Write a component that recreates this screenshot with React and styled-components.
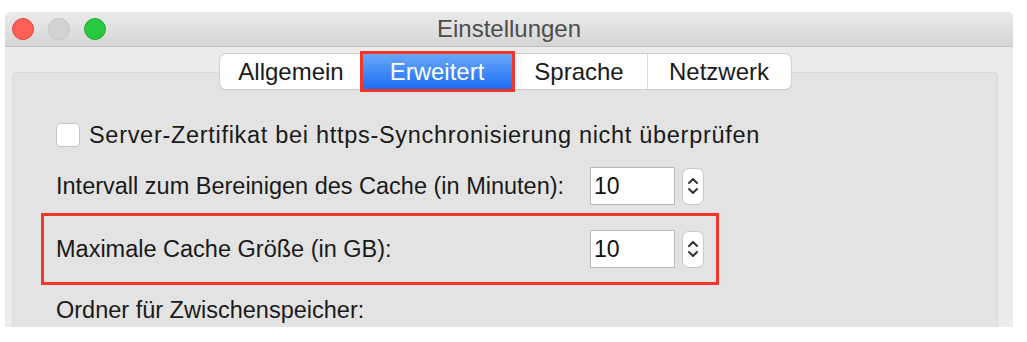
import React from "react";
import styled, { createGlobalStyle } from "styled-components";

const GlobalStyle = createGlobalStyle`
  body {
    margin: 0;
    background: #ffffff;
    font-family: "Liberation Sans", Arial, sans-serif;
  }
`;

const Window = styled.div`
  margin: 12px 0 0 5px;
  width: 1008px;
  height: 315px;
  overflow: hidden;
  background: #ececec;
  border-radius: 5px 5px 0 0;
  display: flex;
  flex-direction: column;
`;

const TitleBar = styled.div`
  height: 34px;
  flex-shrink: 0;
  display: flex;
  align-items: center;
  position: relative;
  background: linear-gradient(#ebebeb, #d5d5d5);
  border-bottom: 1px solid #c2c2c2;
`;

const Lights = styled.div`
  display: flex;
  gap: 14px;
  padding-left: 7px;
`;

const Light = styled.span`
  width: 22px;
  height: 22px;
  border-radius: 50%;
  background: ${(p) => p.color};
  border: 1px solid ${(p) => p.edge};
  box-sizing: border-box;
`;

const Title = styled.div`
  position: absolute;
  left: 0;
  right: 0;
  text-align: center;
  font-size: 24px;
  color: #4d4d4d;
`;

const Content = styled.div`
  flex: 1;
  padding: 7px 15px 0 7px;
  display: flex;
  flex-direction: column;
`;

const TabBar = styled.div`
  align-self: center;
  display: flex;
  height: 35px;
  position: relative;
  z-index: 1;
  background: #ffffff;
  border-radius: 6px;
  box-shadow: 0 0 0 1px #cfcfcf, 0 1px 1px rgba(0, 0, 0, 0.15);
`;

const Tab = styled.div`
  width: ${(p) => p.w}px;
  display: flex;
  align-items: center;
  justify-content: center;
  font-size: 24px;
  color: ${(p) => (p.active ? "#ffffff" : "#1a1a1a")};
  background: ${(p) =>
    p.active ? "linear-gradient(#6aa7f9, #1b6ef3)" : "transparent"};
  border-left: ${(p) => (p.first || p.active || p.afterActive ? "none" : "1px solid #dadada")};
  box-sizing: border-box;
  outline: ${(p) => (p.active ? "3px solid #f2362a" : "none")};
`;

const GroupBox = styled.div`
  flex: 1;
  margin-top: -17px;
  background: #e3e3e3;
  border: 1px solid #d8d8d8;
  border-bottom: none;
  border-radius: 5px 5px 0 0;
  padding: 48px 0 0 28px;
  display: flex;
  flex-direction: column;
`;

const Row = styled.div`
  display: flex;
  align-items: center;
  white-space: nowrap;
  font-size: 23.5px;
  letter-spacing: ${(p) => p.spacing || 0}px;
  color: #1a1a1a;
  box-sizing: border-box;
  width: 678px;
  height: ${(p) => p.h}px;
  margin-top: ${(p) => p.gap || 0}px;
  padding-left: ${(p) => (p.marked ? 12 : 15)}px;
  border: ${(p) => (p.marked ? "3px solid #f2362a" : "none")};
`;

const CheckBox = styled.span`
  width: 24px;
  height: 24px;
  box-sizing: border-box;
  background: #ffffff;
  border: 1px solid #c4c4c4;
  border-radius: 5px;
  margin-right: 9px;
  flex-shrink: 0;
`;

const Label = styled.span`
  width: 534px;
  flex-shrink: 0;
`;

const NumberField = styled.div`
  width: 85px;
  height: 38px;
  box-sizing: border-box;
  background: #ffffff;
  border: 1px solid #b9b9b9;
  display: flex;
  align-items: center;
  padding-left: 3px;
  font-size: 23px;
  color: #111111;
`;

const Stepper = styled.div`
  width: 22px;
  height: 37px;
  margin-left: 7px;
  box-sizing: border-box;
  background: #ffffff;
  border: 1px solid #c8c8c8;
  border-radius: 7px;
  display: flex;
  align-items: center;
  justify-content: center;
`;

const Spin = () => (
  <Stepper>
    <svg width="12" height="26" viewBox="0 0 12 26">
      <path d="M2 10 L6 6 L10 10" fill="none" stroke="#333" strokeWidth="2" strokeLinecap="round" strokeLinejoin="round" />
      <path d="M2 16 L6 20 L10 16" fill="none" stroke="#333" strokeWidth="2" strokeLinecap="round" strokeLinejoin="round" />
    </svg>
  </Stepper>
);

export default function App() {
  return (
    <>
      <GlobalStyle />
      <Window>
        <TitleBar>
          <Lights>
            <Light color="#fe5f57" edge="#e5463f" />
            <Light color="#d3d3d3" edge="#c2c2c2" />
            <Light color="#28c840" edge="#1fae33" />
          </Lights>
          <Title>Einstellungen</Title>
        </TitleBar>
        <Content>
          <TabBar>
            <Tab w={143} first>Allgemein</Tab>
            <Tab w={149} active>Erweitert</Tab>
            <Tab w={135} afterActive>Sprache</Tab>
            <Tab w={144}>Netzwerk</Tab>
          </TabBar>
          <GroupBox>
            <Row h={28} spacing={0.7}>
              <CheckBox />
              Server-Zertifikat bei https-Synchronisierung nicht überprüfen
            </Row>
            <Row h={38} gap={18}>
              <Label>Intervall zum Bereinigen des Cache (in Minuten):</Label>
              <NumberField>10</NumberField>
              <Spin />
            </Row>
            <Row h={72} gap={8} marked>
              <Label>Maximale Cache Größe (in GB):</Label>
              <NumberField>10</NumberField>
              <Spin />
            </Row>
            <Row h={24} gap={13}>
              Ordner für Zwischenspeicher:
            </Row>
          </GroupBox>
        </Content>
      </Window>
    </>
  );
}
